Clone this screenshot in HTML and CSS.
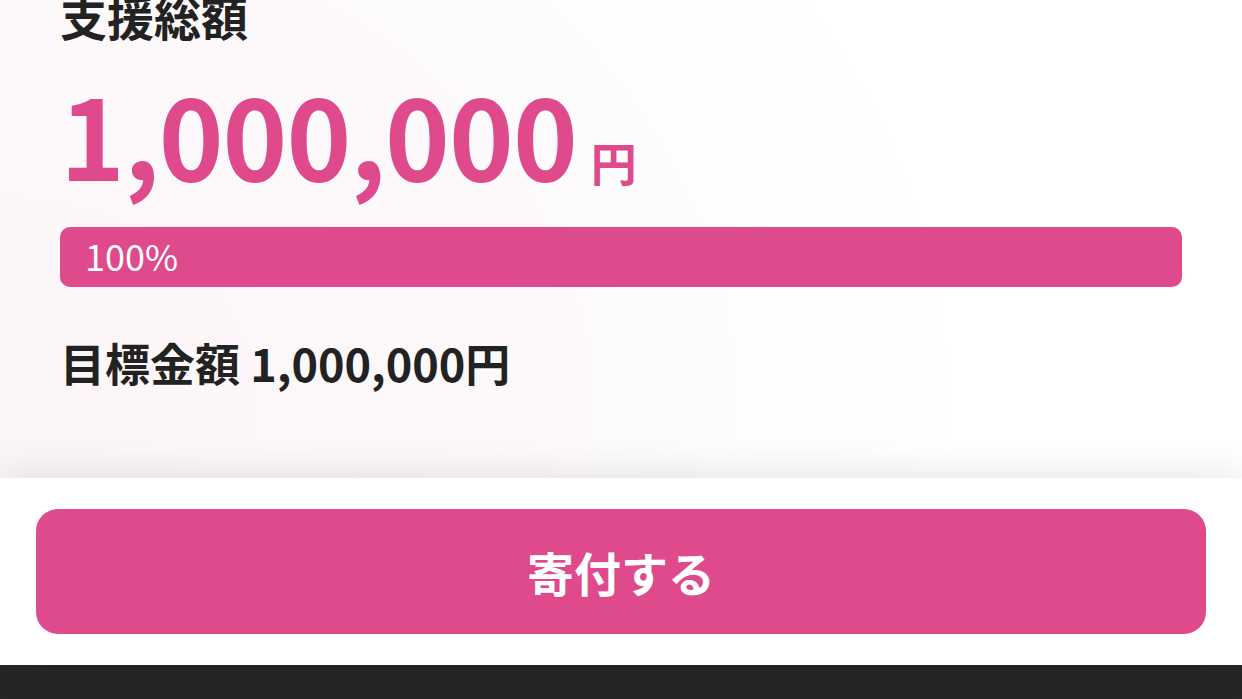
FILE: index.html
```html
<!DOCTYPE html>
<html lang="ja">
<head>
    <meta charset="UTF-8">
    <meta name="viewport" content="width=device-width, initial-scale=1.0">
    <title>支援総額</title>
    <link rel="stylesheet" href="styles.css">
</head>
<body>
    <div class="page">
        <div class="summary">
            <h2 class="summary-title">支援総額</h2>
            <div class="total">
                <span class="total-amount">1,000,000</span>
                <span class="total-unit">円</span>
            </div>
            <div class="progress">
                <div class="progress-fill" style="width: 100%;">
                    <span class="progress-text">100%</span>
                </div>
            </div>
            <p class="goal">目標金額 1,000,000円</p>
        </div>

        <div class="action-bar">
            <button class="btn-donate">寄付する</button>
        </div>
        <div class="home-bar"></div>
    </div>
</body>
</html>
```

FILE: styles.css
```css
* {
    margin: 0;
    padding: 0;
    box-sizing: border-box;
}

html, body {
    height: 100%;
}

body {
    font-family: "Noto Sans CJK JP", "Noto Sans", sans-serif;
    color: #222;
    background: #fff;
    overflow: hidden;
}

.page {
    display: flex;
    flex-direction: column;
    height: 699px;
}

.summary {
    flex: 1;
    overflow: hidden;
    padding: 0 60px;
    background: radial-gradient(ellipse 950px 780px at 0% 85%, #fcf5f8 0%, #fdf9fb 55%, #ffffff 100%);
}

.summary-title {
    font-size: 47px;
    font-weight: 700;
    line-height: 48px;
    margin-top: -8px;
    color: #222;
}

.total {
    display: flex;
    align-items: baseline;
    gap: 14px;
    margin-top: 28px;
    color: #de4a8c;
}

.total-amount {
    font-size: 110px;
    font-weight: 700;
    line-height: 130px;
    letter-spacing: -1px;
}

.total-unit {
    font-size: 46px;
    font-weight: 700;
}

.progress {
    margin-top: 29px;
    height: 60px;
    border-radius: 10px;
    background: #f1d3e1;
    overflow: hidden;
}

.progress-fill {
    height: 100%;
    background: #de4a8c;
    display: flex;
    align-items: center;
    padding: 0 0 4px 25px;
}

.progress-text {
    color: #fff;
    font-size: 36px;
    font-weight: 400;
}

.goal {
    margin-top: 46px;
    font-size: 45px;
    font-weight: 700;
    line-height: 60px;
}

.action-bar {
    background: #fff;
    padding: 31px 36px;
    box-shadow: 0 0 40px rgba(0, 0, 0, 0.12);
    position: relative;
}

.btn-donate {
    display: block;
    width: 100%;
    height: 125px;
    border: none;
    border-radius: 22px;
    background: #de4a8c;
    color: #fff;
    font-family: inherit;
    font-size: 47px;
    font-weight: 700;
    cursor: pointer;
}

.home-bar {
    height: 34px;
    background: #262626;
}
```
